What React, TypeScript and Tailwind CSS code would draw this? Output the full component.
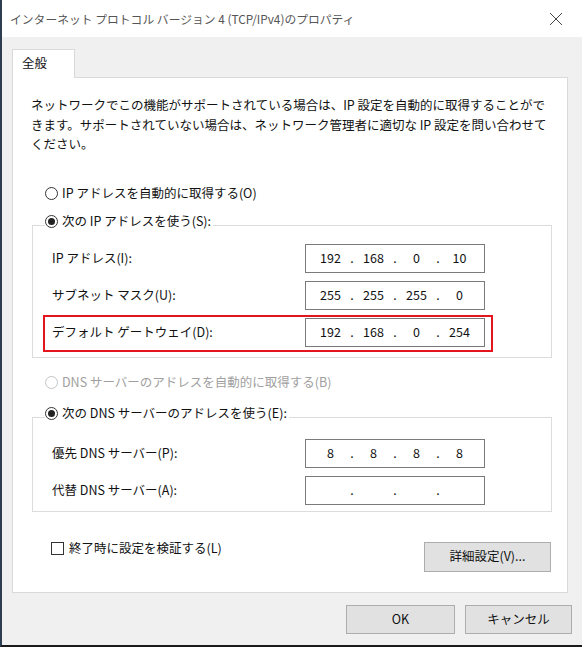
import React from 'react';

const jp = "font-['Noto_Sans_CJK_JP','Noto_Sans',sans-serif]";

const Radio: React.FC<{ checked?: boolean; disabled?: boolean }> = ({ checked, disabled }) => (
  <span
    className={`w-[13px] h-[13px] rounded-full border bg-white flex items-center justify-center shrink-0 ${
      disabled ? 'border-[#c4c4c4]' : 'border-[#333]'
    }`}
  >
    {checked && <span className="w-[7px] h-[7px] rounded-full bg-[#222]" />}
  </span>
);

const IpBox: React.FC<{ parts: string[] }> = ({ parts }) => (
  <div className="w-[180px] h-[29px] border border-[#7a7a7a] bg-white flex items-center pl-[8px] text-[12.5px] text-[#111]">
    {parts.map((p, i) => (
      <React.Fragment key={i}>
        {i > 0 && <span className="w-[10px] text-center">.</span>}
        <span className="w-[33px] text-center">{p}</span>
      </React.Fragment>
    ))}
  </div>
);

const Row: React.FC<{ label: string; parts: string[]; highlight?: boolean }> = ({ label, parts, highlight }) => (
  <div
    className={`ml-[10px] w-[450px] h-[37px] flex items-start border-2 pt-px pl-[7px] pr-[6px] ${
      highlight ? 'border-[#e3161d]' : 'border-transparent'
    }`}
  >
    <span className="flex-1 h-[29px] flex items-center">{label}</span>
    <IpBox parts={parts} />
  </div>
);

// legend is 28px tall so the group line sits a little below the caption
const Caption: React.FC<{ text: string }> = ({ text }) => (
  <legend className="ml-[12px] h-[28px] pr-[2px]">
    <span className="h-[20px] flex items-center gap-[4px]">
      <Radio checked />
      <span>{text}</span>
    </span>
  </legend>
);

export default function App() {
  return (
    <div
      className={`w-[582px] h-[647px] bg-[#f0f0f0] border-l-2 border-l-[#2c3e50] border-b-2 border-b-[#1a1a1a] flex flex-col text-[12.5px] text-[#111] ${jp}`}
    >
      {/* title bar */}
      <div className="h-[37px] bg-white flex items-center justify-between pl-[8px] pr-[19px] shrink-0">
        <span className="text-[11.8px] text-[#555]">インターネット プロトコル バージョン 4 (TCP/IPv4)のプロパティ</span>
        <svg width="14" height="14" viewBox="0 0 14 14" className="text-[#444]">
          <path d="M1 1L13 13M13 1L1 13" stroke="currentColor" strokeWidth="1" />
        </svg>
      </div>

      <div className="pl-[10px] pr-[10px]">
        {/* tab */}
        <div className="mt-[12px] w-[63px] h-[29px] bg-white border border-[#d9d9d9] border-b-0 -mb-px relative z-10 pl-[9px] pt-[4px]">
          全般
        </div>

        {/* tab panel */}
        <div className="w-[556px] h-[516px] bg-white border border-[#d9d9d9] pl-[18px] pt-[17px]">
          <p className="leading-[19.5px] whitespace-nowrap">
            ネットワークでこの機能がサポートされている場合は、IP 設定を自動的に取得することがで
            <br />
            きます。サポートされていない場合は、ネットワーク管理者に適切な IP 設定を問い合わせて
            <br />
            ください。
          </p>

          <label className="mt-[30px] ml-[14px] h-[20px] flex items-center gap-[4px]">
            <Radio />
            <span>IP アドレスを自動的に取得する(O)</span>
          </label>

          <fieldset className="mt-[8px] ml-px w-[520px] border border-[#dcdcdc] pt-px pb-[5px]">
            <Caption text="次の IP アドレスを使う(S):" />
            <Row label="IP アドレス(I):" parts={['192', '168', '0', '10']} />
            <Row label="サブネット マスク(U):" parts={['255', '255', '255', '0']} />
            <Row label="デフォルト ゲートウェイ(D):" parts={['192', '168', '0', '254']} highlight />
          </fieldset>

          <label className="mt-[15px] ml-[14px] h-[20px] flex items-center gap-[4px] text-[#a0a0a0]">
            <Radio disabled />
            <span>DNS サーバーのアドレスを自動的に取得する(B)</span>
          </label>

          <fieldset className="mt-[11px] ml-px w-[520px] border border-[#dcdcdc] pt-[4px] pb-px">
            <Caption text="次の DNS サーバーのアドレスを使う(E):" />
            <Row label="優先 DNS サーバー(P):" parts={['8', '8', '8', '8']} />
            <Row label="代替 DNS サーバー(A):" parts={['', '', '', '']} />
          </fieldset>

          <div className="mt-[30px] flex items-start justify-between pr-[16px]">
            <label className="-mt-[3px] ml-[20px] h-[20px] flex items-center gap-[5px]">
              <span className="w-[13px] h-[13px] border border-[#333] bg-white" />
              <span>終了時に設定を検証する(L)</span>
            </label>
            <button className="w-[127px] h-[30px] bg-[#e1e1e1] border border-[#adadad]">詳細設定(V)...</button>
          </div>
        </div>

        {/* dialog buttons */}
        <div className="mt-[12px] flex justify-end gap-[10px]">
          <button className="w-[109px] h-[29px] bg-[#e1e1e1] border border-[#adadad]">OK</button>
          <button className="w-[107px] h-[29px] bg-[#e1e1e1] border border-[#adadad]">キャンセル</button>
        </div>
      </div>
    </div>
  );
}
